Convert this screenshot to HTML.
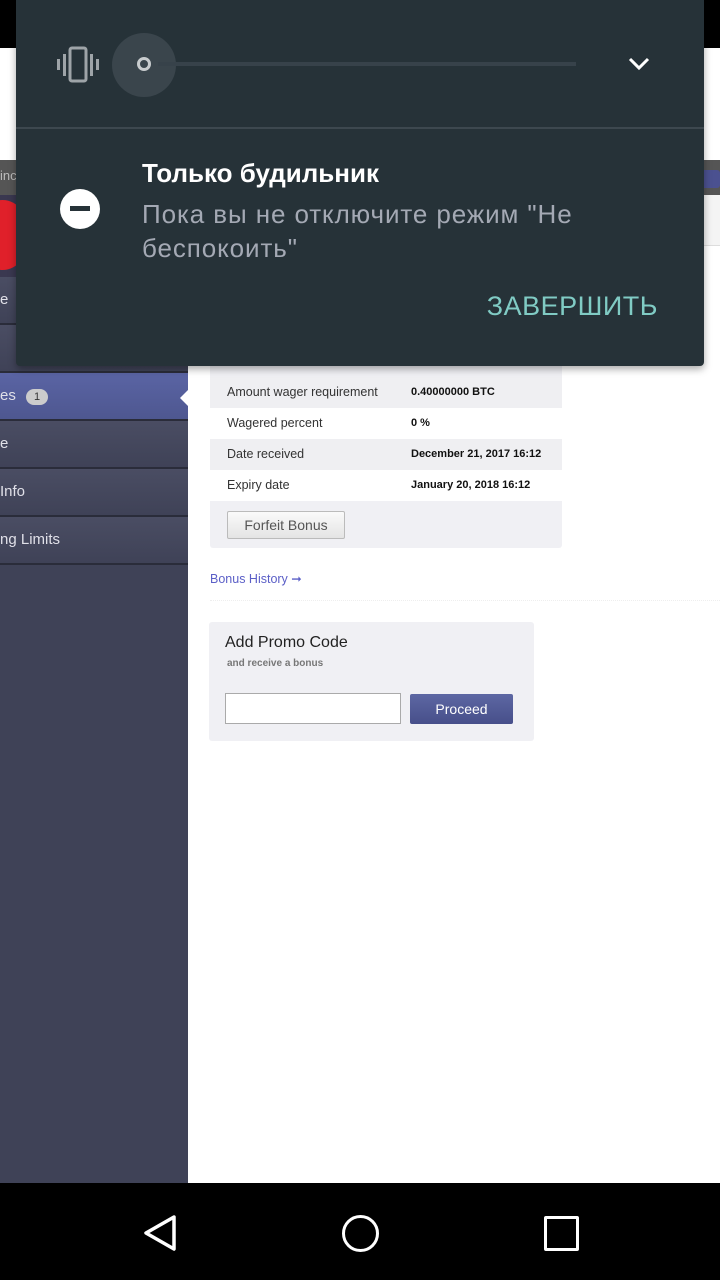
<!DOCTYPE html>
<html><head><meta charset="utf-8"><style>
body{margin:0;width:720px;height:1280px;position:relative;overflow:hidden;background:#fff;font-family:"Liberation Sans",sans-serif}
.abs{position:absolute}
.side{left:0;top:195px;width:188px;height:988px;background:#3f4257}
.item{position:absolute;left:0;width:188px;height:46px;border-bottom:2px solid #2a2c3a;color:#e0e0e8;font-size:15px;line-height:46px;background:linear-gradient(#4a4d63,#3f4257)}
.row{position:absolute;left:0;width:352px;height:31px;font-size:12.5px;line-height:31px;color:#333}
.row span{position:absolute;left:17px}
.row b{position:absolute;left:201px;font-size:11px;color:#111}
</style></head><body>
<div class="abs" style="left:0;top:0;width:720px;height:48px;background:#000"></div>
<div class="abs" style="left:0;top:160px;width:720px;height:35px;background:#555"></div>
<div class="abs" style="left:0;top:168px;font-size:13px;color:#bbb">inc</div>
<div class="abs" style="left:688px;top:170px;width:32px;height:18px;background:#4b5190;border-radius:3px"></div>
<div class="abs" style="left:600px;top:195px;width:120px;height:50px;background:#f4f4f4;border-bottom:1px solid #ddd"></div>
<div class="abs side">
 <div class="abs" style="left:0;top:0;width:188px;height:82px;background:#3a3850"></div>
 <div class="abs" style="left:-25px;top:5px;width:55px;height:70px;border-radius:50%;background:#e0202a"></div>
 <div class="item" style="top:82px">e</div>
 <div class="item" style="top:130px"></div>
 <div class="item" style="top:178px;background:linear-gradient(#5a64a4,#4e5790)">es <span style="display:inline-block;background:#ccc;color:#333;border-radius:8px;font-size:11px;line-height:16px;padding:0 8px;margin-left:6px">1</span></div>
 <div class="item" style="top:226px">e</div>
 <div class="item" style="top:274px">Info</div>
 <div class="item" style="top:322px">ng Limits</div>
</div>
<div class="abs" style="left:180px;top:390px;width:0;height:0;border-top:8px solid transparent;border-bottom:8px solid transparent;border-right:8px solid #fff"></div>
<div class="abs" style="left:210px;top:350px;width:352px;height:198px;background:#f0f0f4;border-radius:3px">
 <div class="row" style="top:27px;background:#efeff2"><span>Amount wager requirement</span><b>0.40000000 BTC</b></div>
 <div class="row" style="top:58px;background:#fff"><span>Wagered percent</span><b>0 %</b></div>
 <div class="row" style="top:89px;background:#efeff2"><span>Date received</span><b>December 21, 2017 16:12</b></div>
 <div class="row" style="top:120px;background:#fff"><span>Expiry date</span><b>January 20, 2018 16:12</b></div>
 <div class="abs" style="left:17px;top:161px;width:116px;height:26px;background:linear-gradient(#fafafa,#e4e4e4);border:1px solid #bbb;border-radius:2px;font-size:14px;color:#555;text-align:center;line-height:26px">Forfeit Bonus</div>
</div>
<div class="abs" style="left:210px;top:571px;font-size:12.5px;color:#5b5fc7">Bonus History ➞</div>
<div class="abs" style="left:210px;top:600px;width:510px;border-top:1px dotted #eee"></div>
<div class="abs" style="left:209px;top:622px;width:325px;height:119px;background:#f0f0f4;border-radius:3px">
 <div class="abs" style="left:16px;top:12px;font-size:16px;color:#222">Add Promo Code</div>
 <div class="abs" style="left:18px;top:36px;font-size:10px;color:#777;font-weight:bold">and receive a bonus</div>
 <div class="abs" style="left:16px;top:71px;width:174px;height:29px;background:#fff;border:1px solid #aaa"></div>
 <div class="abs" style="left:201px;top:72px;width:103px;height:30px;background:linear-gradient(#5d67a3,#474f8a);border-radius:2px;color:#fff;font-size:14px;text-align:center;line-height:30px">Proceed</div>
</div>
<div class="abs" style="left:16px;top:0;width:688px;height:366px;background:#263238;border-radius:0 0 4px 4px;box-shadow:0 3px 8px rgba(0,0,0,.35)">
 <svg class="abs" style="left:40px;top:46px" width="50" height="38" viewBox="0 0 50 38"><rect x="1" y="13" width="3" height="11" fill="#9ea4a8"/><rect x="7" y="8" width="3" height="22" fill="#9ea4a8"/><rect x="14" y="2" width="16" height="33" rx="2" fill="none" stroke="#9ea4a8" stroke-width="3"/><rect x="34" y="8" width="3" height="22" fill="#9ea4a8"/><rect x="40" y="13" width="3" height="11" fill="#9ea4a8"/></svg>
 <div class="abs" style="left:96px;top:33px;width:64px;height:64px;border-radius:50%;background:#3a454c"></div>
 <div class="abs" style="left:142px;top:62px;width:418px;height:4px;background:#37424a"></div>
 <div class="abs" style="left:121px;top:57px;width:8px;height:8px;border:3px solid #c8ccce;border-radius:50%"></div>
 <svg class="abs" style="left:612px;top:56px" width="22" height="16" viewBox="0 0 22 16"><path d="M2 3 L11 12 L20 3" stroke="#fff" stroke-width="3" fill="none"/></svg>
 <div class="abs" style="left:0;top:127px;width:688px;height:2px;background:#3d484f"></div>
 <div class="abs" style="left:44px;top:189px;width:40px;height:40px;border-radius:50%;background:#fff"></div>
 <div class="abs" style="left:54px;top:206px;width:20px;height:5px;background:#263238"></div>
 <div class="abs" style="left:126px;top:158px;font-size:26px;font-weight:bold;color:#fff">Только будильник</div>
 <div class="abs" style="left:126px;top:197px;width:520px;font-size:26px;letter-spacing:0.9px;line-height:34px;color:#a4a9b4">Пока вы не отключите режим "Не беспокоить"</div>
 <div class="abs" style="right:46px;top:291px;font-size:27px;color:#80cbc4;letter-spacing:0.5px">ЗАВЕРШИТЬ</div>
</div>
<div class="abs" style="left:0;top:1183px;width:720px;height:97px;background:#000">
 <svg class="abs" style="left:140px;top:30px" width="40" height="40" viewBox="0 0 40 40"><path d="M34 4 L6 20 L34 36 Z" stroke="#fff" stroke-width="3.5" fill="none" stroke-linejoin="round"/></svg>
 <div class="abs" style="left:342px;top:32px;width:31px;height:31px;border:3.5px solid #fff;border-radius:50%"></div>
 <div class="abs" style="left:544px;top:33px;width:29px;height:29px;border:3.5px solid #fff;border-radius:2px"></div>
</div>
</body></html>
